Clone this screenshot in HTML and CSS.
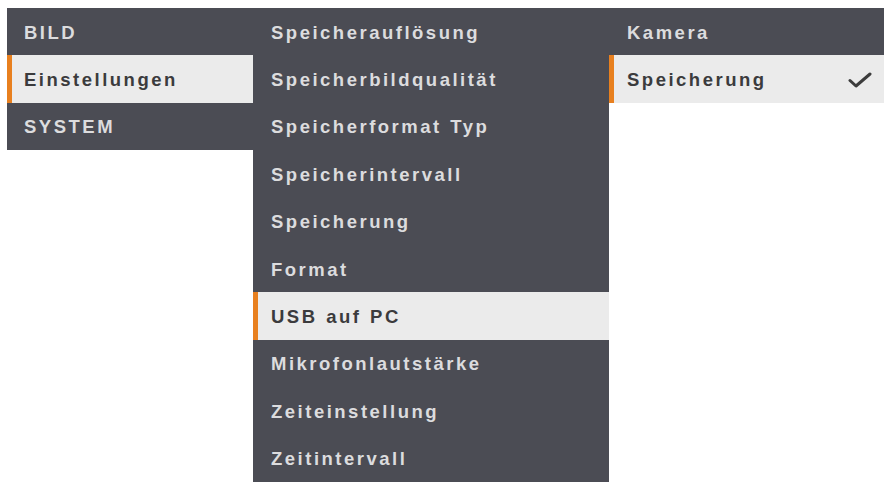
FILE: index.html
```html
<!DOCTYPE html>
<html lang="de">
<head>
<meta charset="utf-8">
<title>Menü</title>
<link rel="stylesheet" href="styles.css">
</head>
<body>
<div class="menus">
  <ul class="col col-1">
    <li class="item">BILD</li>
    <li class="item active">Einstellungen</li>
    <li class="item">SYSTEM</li>
  </ul>
  <ul class="col col-2">
    <li class="item">Speicherauflösung</li>
    <li class="item">Speicherbildqualität</li>
    <li class="item">Speicherformat Typ</li>
    <li class="item">Speicherintervall</li>
    <li class="item">Speicherung</li>
    <li class="item">Format</li>
    <li class="item active">USB auf PC</li>
    <li class="item">Mikrofonlautstärke</li>
    <li class="item">Zeiteinstellung</li>
    <li class="item">Zeitintervall</li>
  </ul>
  <ul class="col col-3">
    <li class="item">Kamera</li>
    <li class="item active checked">Speicherung
      <svg class="check" viewBox="0 0 24 16" width="24" height="16" aria-hidden="true"><path d="M2 8.5 L8 14 L22 2" fill="none" stroke="#3c3c3c" stroke-width="3" stroke-linecap="round" stroke-linejoin="round"/></svg>
    </li>
  </ul>
</div>
</body>
</html>
```
FILE: styles.css
```css
html, body {
  margin: 0;
  padding: 0;
  background: #ffffff;
}
body {
  padding: 8px 0 0 7px;
  font-family: "Liberation Sans", Arial, sans-serif;
}
.menus {
  display: flex;
  align-items: flex-start;
}
.col {
  list-style: none;
  margin: 0;
  padding: 0;
  background: #4b4c54;
}
.col-1 { width: 246px; }
.col-2 { width: 356px; }
.col-3 { width: 275px; }
.item {
  height: 47.4px;
  display: flex;
  align-items: center;
  justify-content: space-between;
  box-sizing: border-box;
  padding: 2px 12px 0 17px;
  color: #dcdcde;
  font-size: 18.5px;
  font-weight: bold;
  letter-spacing: 2.5px;
  word-spacing: 1px;
}
.col-2 .item, .col-3 .item { padding-left: 18px; }
.item.active {
  background: #ebebeb;
  color: #3b3b3d;
  box-shadow: inset 5px 0 0 #e8801f;
}
.check {
  display: block;
  margin-top: -1px;
}
```
